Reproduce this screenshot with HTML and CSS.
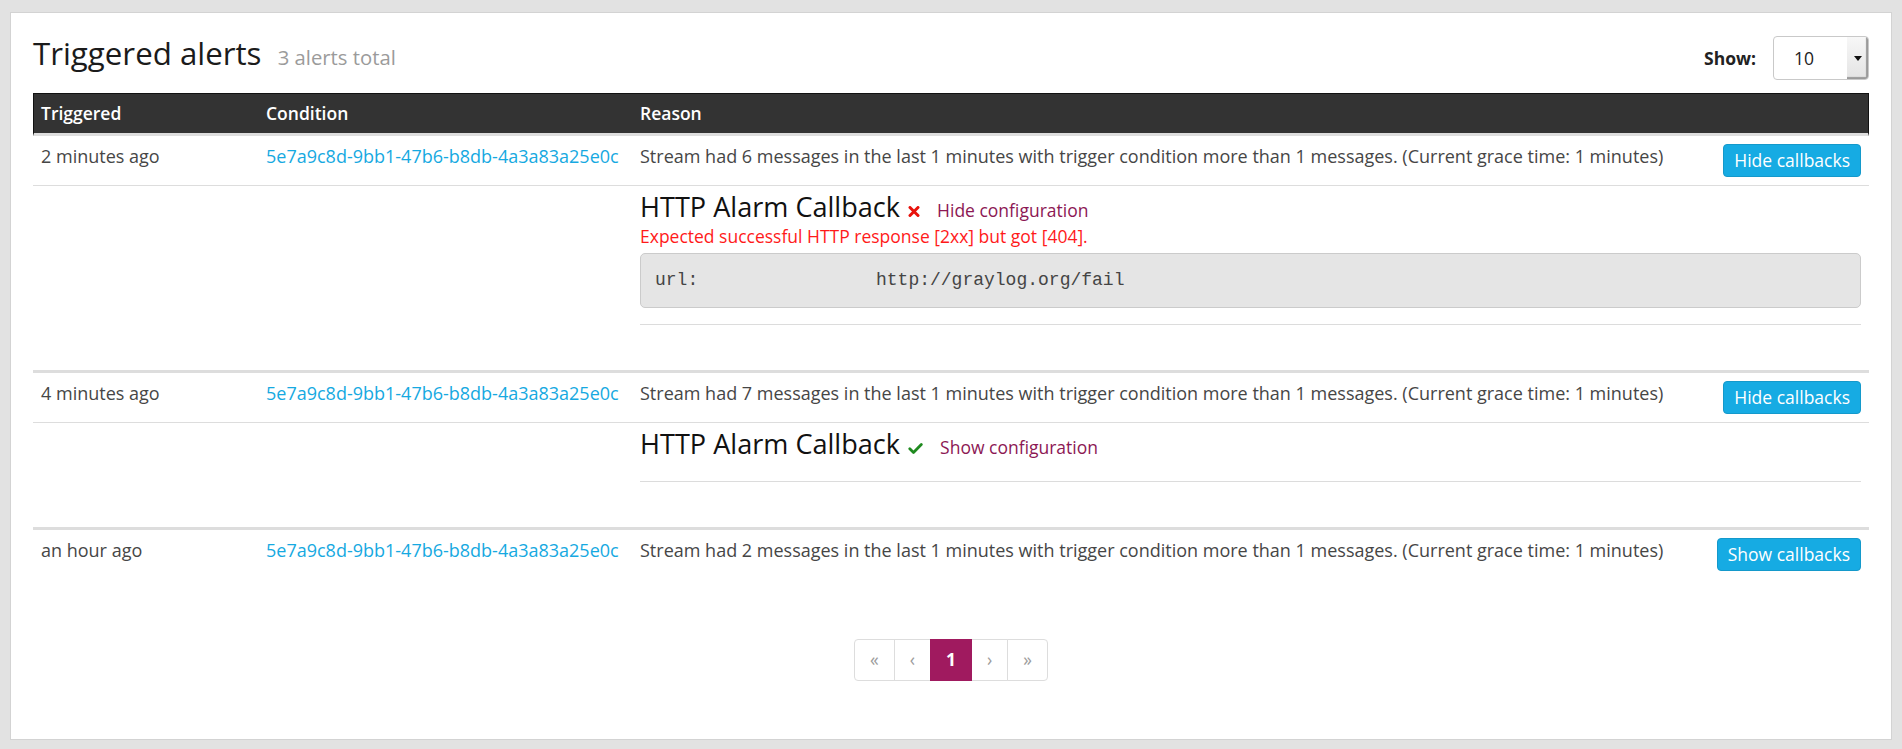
FILE: index.html
```html
<!DOCTYPE html>
<html lang="en">
<head>
<meta charset="utf-8">
<title>Triggered alerts</title>
<link rel="stylesheet" href="styles.css">
</head>
<body>
<div class="panel">
  <div class="panel-head">
    <h1 class="title">Triggered alerts <small class="total">3 alerts total</small></h1>
    <div class="show">
      <span class="show-label">Show:</span>
      <div class="select">
        <span class="select-value">10</span>
        <span class="select-arrow"><svg width="8" height="5" viewBox="0 0 8 5"><path d="M0 0h8L4 5z" fill="#111"/></svg></span>
      </div>
    </div>
  </div>

  <table class="alerts">
    <colgroup><col class="c-time"><col class="c-cond"><col class="c-reason"></colgroup>
    <thead>
      <tr><th>Triggered</th><th>Condition</th><th>Reason</th></tr>
    </thead>
    <tbody>
      <tr>
        <td>2 minutes ago</td>
        <td><a class="cond">5e7a9c8d-9bb1-47b6-b8db-4a3a83a25e0c</a></td>
        <td><div class="reason"><span class="reason-text">Stream had 6 messages in the last 1 minutes with trigger condition more than 1 messages. (Current grace time: 1 minutes)</span><button class="btn">Hide callbacks</button></div></td>
      </tr>
      <tr class="cb-row">
        <td colspan="2"></td>
        <td class="cb-cell">
          <h2 class="cb-title">HTTP Alarm Callback <svg class="icon-fail" width="12" height="11" viewBox="0 0 12 11"><path d="M2 1.5l8 8M10 1.5l-8 8" stroke="#e8120c" stroke-width="3" stroke-linecap="round"/></svg><a class="cfg">Hide configuration</a></h2>
          <div class="cb-error">Expected successful HTTP response [2xx] but got [404].</div>
          <div class="cb-config"><span class="cfg-key">url:</span><span class="cfg-val">http://graylog.org/fail</span></div>
          <hr class="cb-rule">
        </td>
      </tr>
    </tbody>
    <tbody>
      <tr>
        <td>4 minutes ago</td>
        <td><a class="cond">5e7a9c8d-9bb1-47b6-b8db-4a3a83a25e0c</a></td>
        <td><div class="reason"><span class="reason-text">Stream had 7 messages in the last 1 minutes with trigger condition more than 1 messages. (Current grace time: 1 minutes)</span><button class="btn">Hide callbacks</button></div></td>
      </tr>
      <tr class="cb-row">
        <td colspan="2"></td>
        <td class="cb-cell">
          <h2 class="cb-title cb-title-ok">HTTP Alarm Callback <svg class="icon-ok" width="15" height="11" viewBox="0 0 15 11"><path d="M1.8 5.8l3.7 3.6 7.8-7.8" fill="none" stroke="#1f8a1f" stroke-width="2.8" stroke-linecap="round" stroke-linejoin="round"/></svg><a class="cfg">Show configuration</a></h2>
          <hr class="cb-rule">
        </td>
      </tr>
    </tbody>
    <tbody>
      <tr>
        <td>an hour ago</td>
        <td><a class="cond">5e7a9c8d-9bb1-47b6-b8db-4a3a83a25e0c</a></td>
        <td><div class="reason"><span class="reason-text">Stream had 2 messages in the last 1 minutes with trigger condition more than 1 messages. (Current grace time: 1 minutes)</span><button class="btn">Show callbacks</button></div></td>
      </tr>
    </tbody>
  </table>

  <nav class="pager">
    <ul class="pagination">
      <li class="page">«</li>
      <li class="page">‹</li>
      <li class="page active">1</li>
      <li class="page">›</li>
      <li class="page">»</li>
    </ul>
  </nav>
</div>
</body>
</html>
```

FILE: styles.css
```css
html, body {
  margin: 0;
  padding: 0;
}

body {
  background: #e2e2e2;
  padding: 12px 10px 11px;
  font-family: "Open Sans", "DejaVu Sans", sans-serif;
  font-size: 18px;
  line-height: 25px;
  color: #464646;
}

.panel {
  background: #fff;
  border: 1px solid #d3d3d3;
  padding: 23px 22px 22px;
}

.panel-head {
  display: flex;
  justify-content: space-between;
  align-items: flex-start;
  margin-bottom: 13px;
}

.title {
  margin: 0;
  font-size: 31.25px;
  line-height: 1.1;
  font-weight: 400;
  color: #1b1b1b;
}

.total {
  font-size: 20.3px;
  color: #9b9b9b;
  margin-left: 8px;
}

.show {
  display: flex;
  align-items: center;
  height: 44px;
}

.show-label {
  font-size: 17.5px;
  font-weight: 700;
  color: #222;
  margin-right: 17px;
}

.select {
  display: flex;
  width: 96px;
  height: 44px;
  box-sizing: border-box;
  border: 1px solid #c9c9c9;
  border-radius: 4px;
  background: #fff;
  overflow: hidden;
}

.select-value {
  flex: 1;
  display: flex;
  align-items: center;
  padding-left: 20px;
  font-size: 17.5px;
  color: #222;
}

.select-arrow {
  width: 21px;
  display: flex;
  align-items: center;
  justify-content: center;
  background: linear-gradient(#f7f7f7, #e4e4e4);
  box-shadow: inset -2px -2px 1px #9a9a9a;
}

.alerts {
  width: 100%;
  table-layout: fixed;
  border-collapse: separate;
  border-spacing: 0;
}

.c-time { width: 225px; }
.c-cond { width: 374px; }

.alerts th {
  background: #333;
  color: #fff;
  font-size: 17.5px;
  font-weight: 600;
  text-align: left;
  padding: 7px 8px;
  border-top: 1px solid #111;
  border-bottom: 3px solid #dedede;
}

.alerts th:first-child {
  border-left: 1px solid #111;
  padding-left: 7px;
}

.alerts th:last-child {
  border-right: 1px solid #111;
}

.alerts td {
  padding: 8px;
  vertical-align: top;
  white-space: nowrap;
}

.alerts tbody tr + tr td {
  border-top: 1px solid #dddddd;
}

.alerts tbody + tbody tr:first-child td {
  border-top: 3px solid #dddddd;
}

.cond {
  color: #16a9e1;
  text-decoration: none;
}

.reason {
  display: flex;
  justify-content: space-between;
  align-items: flex-start;
}

.btn {
  font-family: "Open Sans", "DejaVu Sans", sans-serif;
  font-size: 17.5px;
  line-height: 25px;
  padding: 3px 10px;
  border: 1px solid #1499cb;
  border-radius: 4px;
  background: #16abe3;
  color: #fff;
}

.alerts td.cb-cell {
  padding-top: 6px;
  white-space: normal;
}

.cb-title {
  margin: 0 0 2px;
  font-size: 27.1px;
  line-height: 30.25px;
  font-weight: 400;
  color: #111;
}

.cb-title-ok {
  margin-bottom: 0;
  padding-bottom: 5px;
}

.icon-fail,
.icon-ok {
  margin-left: 1px;
  vertical-align: baseline;
}

.cfg {
  margin-left: 17px;
  font-size: 17.5px;
  line-height: 1;
  color: #8c1854;
  text-decoration: none;
}

.cb-error {
  font-size: 17.5px;
  color: #ff1a1a;
}

.cb-config {
  margin-top: 4px;
  display: grid;
  grid-template-columns: 221px 1fr;
  padding: 15px 14px;
  border: 1px solid #cbcbcb;
  border-radius: 5px;
  background: #e5e5e5;
  font-family: "Liberation Mono", "DejaVu Sans Mono", monospace;
  font-size: 18px;
  line-height: 23px;
  color: #444;
}

.cb-rule {
  margin: 16px 0 37px;
  border: 0;
  border-top: 1px solid #dcdcdc;
  height: 0;
}

.pager {
  display: flex;
  justify-content: center;
  margin: 60px 0 36px;
}

.pagination {
  display: flex;
  list-style: none;
  margin: 0;
  padding: 0;
}

.page {
  padding: 7.5px 15px;
  border: 1px solid #dddddd;
  margin-left: -1px;
  font-size: 17.5px;
  color: #9c9c9c;
  background: #fff;
}

.page:first-child {
  margin-left: 0;
  border-radius: 4px 0 0 4px;
}

.page:last-child {
  border-radius: 0 4px 4px 0;
}

.page.active {
  background: #a01a5f;
  border-color: #a01a5f;
  color: #fff;
  font-weight: 700;
  position: relative;
}
```
